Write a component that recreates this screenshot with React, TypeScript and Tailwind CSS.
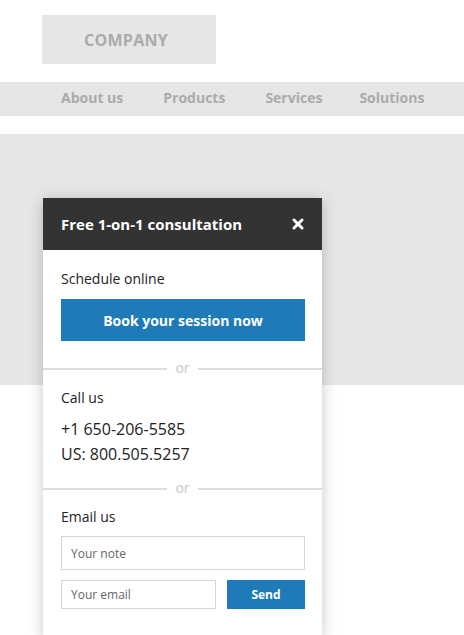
import { X } from "lucide-react";

function OrDivider() {
  return (
    <div className="flex items-center gap-2">
      <div className="h-[2px] flex-1 bg-[#dddddd]" />
      <span className="text-[14px] leading-none text-[#c8c8c8] -mt-[2px]">or</span>
      <div className="h-[2px] flex-1 bg-[#dddddd]" />
    </div>
  );
}

export default function App() {
  const nav = ["About us", "Products", "Services", "Solutions"];

  return (
    <div
      className="relative w-[464px] h-[635px] overflow-hidden bg-white"
      style={{ fontFamily: '"Open Sans", "Noto Sans", sans-serif' }}
    >
      <div className="pt-[15px] pl-[42px]">
        <div className="w-[174px] h-[49px] bg-[#e6e6e6] flex items-center justify-center">
          <span className="mr-[6px] text-[16px] font-bold text-[#ababab] tracking-[0.3px]">COMPANY</span>
        </div>
      </div>

      <nav className="mt-[18px] h-[34px] bg-[#e6e6e6] flex items-center pl-[61px] gap-[40px] pb-[4px]">
        {nav.map((item) => (
          <span key={item} className={"text-[14px] font-bold text-[#ababab]" + (item === "Solutions" ? " -ml-[3px]" : "")}>
            {item}
          </span>
        ))}
      </nav>

      <div className="mt-[18px] h-[251px] bg-[#e6e6e6]" />

      {/* consultation popup */}
      <div className="absolute left-[43px] top-[198px] w-[279px] bg-white shadow-[0_2px_14px_rgba(0,0,0,0.22)]">
        <div className="h-[52px] bg-[#333333] flex items-center justify-between pl-[18px] pr-[16px]">
          <h2 className="text-[15px] font-bold text-white">Free 1-on-1 consultation</h2>
          <X size={16} strokeWidth={4.5} className="text-white" />
        </div>

        <div className="px-[18px] pt-[19px] pr-[17px]">
          <p className="text-[14px] leading-[20px] text-[#222]">Schedule online</p>
          <button className="mt-[10px] w-full h-[42px] bg-[#1f7bb8] text-white text-[14px] font-bold">
            Book your session now
          </button>
        </div>

        <div className="mt-[22px]">
          <OrDivider />
        </div>

        <div className="px-[18px] pt-[13px]">
          <p className="text-[14px] leading-[20px] text-[#222]">Call us</p>
          <div className="mt-[9px] text-[16px] leading-[25px] text-[#222]">
            <p>+1 650-206-5585</p>
            <p>US: 800.505.5257</p>
          </div>
        </div>

        <div className="mt-[16px]">
          <OrDivider />
        </div>

        <div className="px-[18px] pr-[17px] pt-[12px] pb-[30px]">
          <p className="text-[14px] leading-[20px] text-[#222]">Email us</p>
          <input
            className="mt-[9px] w-full h-[34px] border border-[#d6d6d6] px-[9px] text-[12px] placeholder:text-[#666] outline-none"
            placeholder="Your note"
          />
          <div className="mt-[10px] flex gap-[11px]">
            <input
              className="w-[155px] h-[29px] border border-[#d6d6d6] px-[9px] text-[12px] placeholder:text-[#666] outline-none"
              placeholder="Your email"
            />
            <button className="flex-1 h-[29px] bg-[#1f7bb8] text-white text-[12px] font-bold">
              Send
            </button>
          </div>
        </div>
      </div>
    </div>
  );
}
